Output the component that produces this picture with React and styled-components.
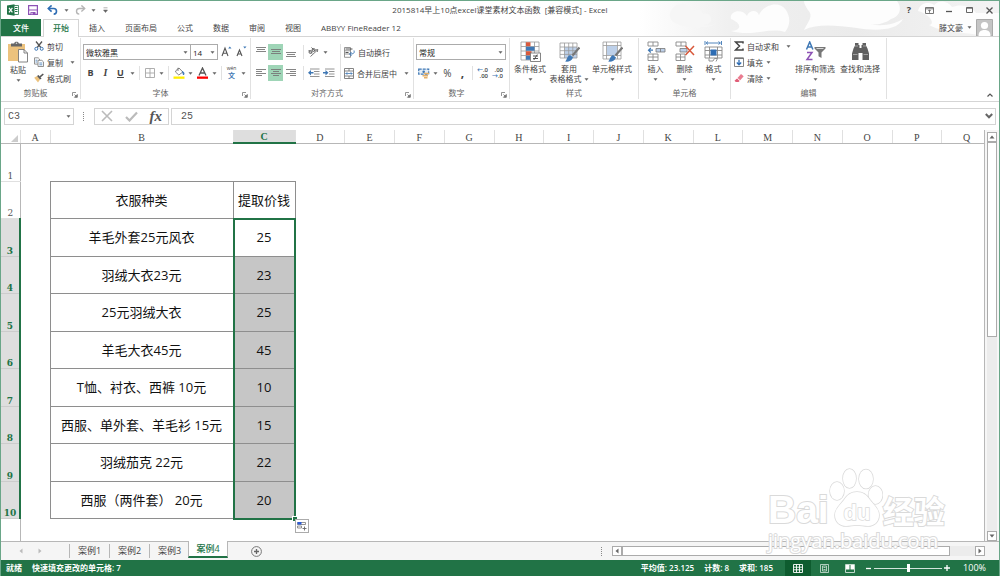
import React from "react";
import styled, { createGlobalStyle, css } from "styled-components";

const GlobalStyle = createGlobalStyle`
  * { box-sizing: border-box; }
  body {
    margin: 0;
    font-family: "Open Sans", "Noto Sans CJK SC", sans-serif;
    font-size: 8px;
    color: #444;
    background: #fff;
  }
  button, select, input {
    font: inherit;
    color: inherit;
    margin: 0;
    padding: 0;
    border: 0;
    background: none;
  }
  svg { display: block; flex: none; }
`;

const Window = styled.div`
  display: flex;
  flex-direction: column;
  height: 100vh;
  min-height: 480px;
  border: 1px solid #6aa688;
  border-bottom: 0;
  position: relative;
  overflow: hidden;
`;

/* ---------- title bar and tabs ---------- */

const Header = styled.header`
  position: relative;
  flex: none;
`;

const HeaderArt = styled.svg`
  position: absolute;
  top: 0;
  right: 0;
`;

const TitleBar = styled.div`
  position: relative;
  display: grid;
  grid-template-columns: 1fr auto 1fr;
  align-items: center;
  height: 18px;
`;

const QuickAccess = styled.div`
  display: flex;
  align-items: center;
  padding-left: 2px;
`;

const Title = styled.h1`
  margin: 0;
  font-size: 8px;
  font-weight: 400;
  line-height: 18px;
`;

const WindowButtons = styled.div`
  display: flex;
  justify-content: flex-end;
`;

const IconButton = styled.button`
  display: flex;
  align-items: center;
  justify-content: center;
  flex: none;
  width: ${({ $w }) => $w || 15}px;
  height: 16px;
  background: ${({ $on }) => ($on ? "#9fd5b7" : "none")};
`;

const TabRow = styled.nav`
  position: relative;
  display: flex;
  align-items: stretch;
  height: 18px;
  border-bottom: 1px solid #d5d5d5;
`;

const Tab = styled.a`
  padding: 0 10px;
  line-height: 17px;
  color: #444;
  text-decoration: none;
  white-space: nowrap;
  ${({ $active }) =>
    $active &&
    css`
      height: 18px;
      padding: 0 9px;
      background: #fff;
      border: 1px solid #d5d5d5;
      border-bottom: 0;
      line-height: 16px;
      color: #217346;
      font-weight: 500;
    `}
`;

const FileTab = styled(Tab)`
  width: 40px;
  margin-right: 2px;
  padding: 0;
  text-align: center;
  color: #fff;
  font-weight: 500;
  background: #217346;
`;

const Account = styled.button`
  display: flex;
  align-items: center;
  gap: 4px;
  margin: 0 6px 0 auto;
`;

/* ---------- ribbon ---------- */

const Ribbon = styled.section`
  display: flex;
  flex: none;
  height: 65px;
  border-bottom: 1px solid #d5d5d5;
`;

const Group = styled.div`
  display: flex;
  flex-direction: column;
  flex: none;
  width: ${({ $w }) => $w}px;
  margin: 1px 0 2px;
  border-right: 1px solid #e1e1e1;
`;

const GroupBody = styled.div`
  display: flex;
  flex: 1;
  padding: 0 2px;
`;

const GroupFooter = styled.div`
  display: flex;
  align-items: center;
  height: 12px;
  padding: 0 2px;
  color: #666;
  line-height: 12px;

  span {
    flex: 1;
    text-align: center;
  }

  button {
    width: 10px;
    padding: 3px 0 0 4px;
  }
`;

const Rows = styled.div`
  display: flex;
  flex-direction: column;
  flex: none;
  gap: 5px;
  padding: 6px 0 0;
  ${({ $w }) => $w && `width: ${$w}px;`}
`;

const Row = styled.div`
  display: flex;
  align-items: center;
  height: 16px;
`;

const Divider = styled.span`
  flex: none;
  width: 1px;
  height: ${({ $h }) => $h || 14}px;
  margin: ${({ $top }) => $top || 0}px 2px 0;
  background: #e1e1e1;
`;

const Stack = styled.div`
  display: flex;
  flex-direction: column;
`;

const SmallButton = styled.button`
  display: flex;
  align-items: center;
  gap: 3px;
  height: 16px;
  padding: 0 1px;
  white-space: nowrap;

  svg:last-child {
    margin-left: ${({ $caretGap }) => $caretGap || 0}px;
  }
`;

const BigButton = styled.button`
  display: flex;
  flex-direction: column;
  align-items: center;
  width: ${({ $w }) => $w}px;
  height: 48px;
  padding-top: 3px;
  line-height: 10px;
  white-space: nowrap;

  > svg {
    margin-bottom: 2px;
  }
`;

const CaretLine = styled.span`
  display: flex;
  align-items: center;
  justify-content: center;
  gap: 2px;
  height: 10px;
`;

const SelectBox = styled.div`
  position: relative;
  width: ${({ $w }) => $w}px;
  height: 16px;
  margin-left: ${({ $joined }) => ($joined ? -1 : 0)}px;

  select {
    appearance: none;
    width: 100%;
    height: 100%;
    padding: 0 10px 0 2px;
    border: 1px solid #ababab;
    background: #fff;
    color: #222;
  }

  svg {
    position: absolute;
    right: 3px;
    top: 7px;
    pointer-events: none;
  }
`;

const Letter = styled.span`
  font-size: ${({ $size }) => $size || 9}px;
  line-height: 12px;
  font-weight: ${({ $bold }) => ($bold ? 700 : 400)};
  font-style: ${({ $italic }) => ($italic ? "italic" : "normal")};
  font-family: ${({ $italic }) => ($italic ? '"Liberation Serif", serif' : "inherit")};
  text-decoration: ${({ $underline }) => ($underline ? "underline" : "none")};
`;

const CollapseButton = styled(IconButton)`
  align-self: flex-end;
  margin: 0 2px 0 auto;
  height: 12px;
`;

/* ---------- formula bar ---------- */

const FormulaBar = styled.div`
  display: flex;
  align-items: center;
  flex: none;
  height: 28px;
  padding: 0 3px;
  font-family: "Liberation Mono", monospace;
  font-size: 10px;
  color: #555;
`;

const Field = styled.div`
  display: flex;
  align-items: center;
  justify-content: space-around;
  flex: ${({ $grow }) => ($grow ? 1 : "none")};
  width: ${({ $w }) => ($w ? `${$w}px` : "auto")};
  height: 17px;
  margin-right: ${({ $gap }) => $gap || 0}px;
  border: 1px solid #d4d4d4;
  background: #fff;

  input {
    flex: 1;
    min-width: 0;
    padding-left: ${({ $pad }) => $pad || 3}px;
    outline: none;
  }
`;

const Dots = styled.span`
  flex: none;
  width: 2px;
  height: 9px;
  border-left: 1px dotted #888;
  margin: 0 9px;
`;

const FxButton = styled(IconButton)`
  font: italic 700 15px "Liberation Serif", serif;
  color: #555;
`;

/* ---------- sheet ---------- */

const Workspace = styled.main`
  display: flex;
  flex: 1;
  min-height: 0;
  background: #f6f6f6;
`;

const SheetView = styled.div`
  flex: 1;
  min-width: 0;
  overflow: hidden;
  background: #fff;
  border-right: 1px solid #b7b7b7;
`;

const Sheet = styled.table`
  width: calc(100% + 8px);
  height: 100%;
  table-layout: fixed;
  border-collapse: collapse;

  td, th {
    padding: 0;
  }
`;

const HeadRow = styled.tr`
  height: 13px;
`;

const ColHead = styled.th`
  font: ${({ $active }) => ($active ? 700 : 400)} 10px/10px "Liberation Serif", serif;
  vertical-align: bottom;
  color: ${({ $active }) => ($active ? "#217346" : "#444")};
  background: ${({ $active }) => ($active ? "#dedede" : "#fff")};
  border-right: 1px solid #e0e0e0;
  border-bottom: ${({ $active }) => ($active ? "2px solid #217346" : "1px solid #b7b7b7")};
`;

const Corner = styled(ColHead)`
  svg {
    margin: 0 2px 1px auto;
  }
`;

const SheetRow = styled.tr`
  height: 37px;

  &:nth-child(odd) {
    height: 38px;
  }
`;

const RowHead = styled.th`
  font: ${({ $active }) => ($active ? 700 : 400)} 9px/9px "DejaVu Serif", serif;
  vertical-align: bottom;
  color: ${({ $active }) => ($active ? "#217346" : "#555")};
  background: ${({ $active }) => ($active ? "#dedede" : "#fff")};
  border-bottom: 1px solid ${({ $active }) => ($active ? "#ccc" : "#e0e0e0")};
  border-right: ${({ $active }) => ($active ? "2px solid #217346" : "1px solid #b7b7b7")};
`;

const FillerHead = styled.th`
  border-right: 1px solid #b7b7b7;
`;

const Cell = styled.td`
  position: relative;
  border: 1px solid #8e8e8e;
  text-align: center;
  font-size: 13px;
  line-height: 18px;
  color: #111;
  white-space: nowrap;
  background: ${({ $picked }) => ($picked ? "#c6c6c6" : "#fff")};
`;

const Selection = styled.div`
  position: absolute;
  z-index: 1;
  top: -1px;
  left: -1px;
  right: -1px;
  height: 302px;
  border: 2px solid #217346;
  pointer-events: none;

  &::after {
    content: "";
    position: absolute;
    right: -3px;
    bottom: -3px;
    width: 4px;
    height: 4px;
    background: #217346;
    outline: 1px solid #fff;
  }
`;

const FillOptions = styled.button`
  position: absolute;
  z-index: 1;
  top: 300px;
  left: 100%;
  display: grid;
  place-items: center;
  width: 14px;
  height: 14px;
  border: 1px solid #ababab;
  background: #fff;
`;

const VerticalScroll = styled.div`
  display: flex;
  flex-direction: column;
  flex: none;
  width: 14px;
  padding: 2px 2px 0;
`;

const ScrollButton = styled.button`
  display: grid;
  place-items: center;
  flex: none;
  width: 10px;
  height: 10px;
  border: 1px solid #ababab;
  background: #fff;
`;

const ScrollTrack = styled.div`
  display: flex;
  flex-direction: ${({ $row }) => ($row ? "row" : "column")};
  flex: 1;
  background: #ececec;
`;

const ScrollThumb = styled.div`
  flex: 0 0 ${({ $size }) => $size};
  border: 1px solid #ababab;
  background: #fff;
`;

/* ---------- sheet tabs and status bar ---------- */

const SheetBar = styled.div`
  display: flex;
  align-items: center;
  flex: none;
  height: 19px;
  border-top: 1px solid #b7b7b7;
  background: #f5f5f5;
`;

const SheetNav = styled.div`
  display: flex;
  width: 68px;
  padding-left: 10px;
`;

const SheetTab = styled.button`
  align-self: flex-start;
  width: 40px;
  height: ${({ $active }) => ($active ? 17 : 14)}px;
  margin-top: ${({ $active }) => ($active ? -1 : 2)}px;
  border-left: 1px solid #b7b7b7;
  font-size: 9px;
  line-height: 12px;
  ${({ $active }) =>
    $active &&
    css`
      margin-left: -1px;
      border-right: 1px solid #b7b7b7;
      border-bottom: 2px solid #217346;
      background: #fff;
      color: #217346;
      font-weight: 500;
    `}
`;

const HorizontalScroll = styled.div`
  display: flex;
  width: 373px;
  height: 10px;
  margin-right: 14px;
`;

const StatusBar = styled.footer`
  display: flex;
  align-items: center;
  flex: none;
  height: 16px;
  padding: 0 13px 0 5px;
  background: #217346;
  color: #fff;
  font-weight: 600;
  line-height: 12px;
`;

const StatusText = styled.span`
  margin-right: ${({ $gap }) => $gap || 10}px;
`;

const Spacer = styled.span`
  flex: 1;
`;

const ViewButton = styled.button`
  display: grid;
  place-items: center;
  width: 26px;
  height: 16px;
  background: ${({ $on }) => ($on ? "#0e5c2f" : "none")};
`;

const ZoomSlider = styled.input`
  appearance: none;
  width: 68px;
  height: 12px;
  background: linear-gradient(#d3e4da, #d3e4da) center / 100% 1px no-repeat;

  &::-webkit-slider-thumb {
    appearance: none;
    width: 3px;
    height: 8px;
    background: #fff;
  }
`;

const ZoomLevel = styled.button`
  width: 34px;
  text-align: right;
  font-size: 9px;
  font-weight: 400;
`;

/* ---------- watermark ---------- */

const Watermark = styled.div`
  position: absolute;
  right: 51px;
  bottom: 23px;
  z-index: 2;
  width: 180px;
  color: #fff;
  font-weight: 700;
  -webkit-text-stroke: 2px #dadada;
  paint-order: stroke fill;
  pointer-events: none;
`;

const WatermarkLogo = styled.div`
  display: flex;
  align-items: flex-end;
  height: 62px;
  font-family: "Liberation Sans", "Noto Sans CJK SC", sans-serif;
  font-size: 39px;
  line-height: 38px;
`;

const WatermarkCn = styled.span`
  font-family: "Noto Sans CJK SC", sans-serif;
  font-size: 31px;
  line-height: 38px;
`;

const WatermarkUrl = styled.div`
  font-weight: 400;
  font-size: 20px;
  line-height: 24px;
`;

/* ---------- icons ---------- */

const Svg = ({ w = 12, h = w, vw = w, vh = h, children }) => (
  <svg width={w} height={h} viewBox={`0 0 ${vw} ${vh}`} fill="none" aria-hidden="true">
    {children}
  </svg>
);

const Caret = () => (
  <Svg w={5} h={3}>
    <path d="M0.5 0.3h4L2.5 2.7z" fill="#666" />
  </Svg>
);

const Arrow = ({ d, color = "#666" }) => (
  <Svg w={6}>
    <path d={d} fill={color} />
  </Svg>
);

const ExcelIcon = () => (
  <Svg w={12}>
    <path d="M7 1.5h4.5v9H7" fill="#fff" stroke="#217346" strokeWidth=".8" />
    <path d="M8 3.5h2.5M8 5.5h2.5M8 7.5h2.5" stroke="#217346" />
    <path d="M0 1.5L7.5.3v11.4L0 10.5z" fill="#217346" />
    <path d="M2 3.8l3.4 4.6M5.4 3.8L2 8.4" stroke="#fff" strokeWidth="1.2" />
  </Svg>
);

const SaveIcon = () => (
  <Svg w={10}>
    <path d="M.6.6h8.8v8.8H.6z" stroke="#8d52b5" strokeWidth="1.2" />
    <path d="M.6 5h8.800" stroke="#8d52b5" />
    <path d="M2.500 7h5v2.500h-5z" fill="#8d52b5" />
    <path d="M3.500 7.800h1v1.500h-1z" fill="#fff" />
  </Svg>
);

const UndoIcon = ({ color }) => (
  <Svg w={11} h={10}>
    <path d="M1.5 3.5h5.2a2.8 2.8 0 010 5.6" stroke={color} strokeWidth="1.6" />
    <path d="M4.6.4L1.3 3.5l3.3 3.1" stroke={color} strokeWidth="1.6" />
  </Svg>
);

const RedoIcon = ({ color }) => (
  <Svg w={11} h={10}>
    <path d="M9.5 3.5H4.3a2.8 2.8 0 000 5.6" stroke={color} strokeWidth="1.4" />
    <path d="M6.4.4l3.3 3.1-3.3 3.1" stroke={color} strokeWidth="1.4" />
  </Svg>
);

const PasteIcon = () => (
  <Svg w={22}>
    <path d="M1 3h17v17H1z" fill="#ecc27d" />
    <path d="M4 2.5h3.2C7.2.2 11.8.2 11.8 2.5H15v3H4z" fill="#666" />
    <path d="M8.8 2.2h1.4" stroke="#fff" />
    <path d="M11.5 8.5h5.5l3.5 3.5v9h-9z" fill="#fff" stroke="#777" strokeWidth=".9" />
    <path d="M17 8.5v3.5h3.5" stroke="#777" strokeWidth=".9" />
  </Svg>
);

const CutIcon = () => (
  <Svg w={10}>
    <path d="M2 .5l4.8 6M8 .5L3.2 6.5" stroke="#555" strokeWidth="1.3" />
    <circle cx="2.3" cy="7.8" r="1.5" stroke="#3f78b5" />
    <circle cx="7.7" cy="7.8" r="1.5" stroke="#3f78b5" />
  </Svg>
);

const CopyIcon = () => (
  <Svg w={10}>
    <path d="M.5.8h3.7l1.300 1.300v5H.5z" fill="#fff" stroke="#777" strokeWidth=".8" />
    <path d="M4 3.300h3.800l1.700 1.600v4.600H4z" fill="#fff" stroke="#777" strokeWidth=".8" />
    <path d="M1.500 3.200h1.800M1.500 5h1.800M5.300 6h3M5.300 7.800h3" stroke="#3f78b5" strokeWidth=".8" />
  </Svg>
);

const BrushIcon = () => (
  <Svg w={10}>
    <path d="M.2 4.800L3 3l3 3.400-2 3.200z" fill="#ecc27d" />
    <path d="M3 3l1.500-1L7.600 5.500 6 6.500z" fill="#555" />
    <path d="M6 3.800L9.300 1" stroke="#555" strokeWidth="1.600" />
  </Svg>
);

const BorderIcon = () => (
  <Svg w={10}>
    <path d="M.5.5h9v9h-9zM5 .5v9M.5 5h9" stroke="#a6a6a6" strokeWidth=".9" />
  </Svg>
);

const FillIcon = () => (
  <Svg w={12} h={12}>
    <path d="M3 3.500l3-2.500 3.800 4-4 3L2.500 5z" fill="#fff" stroke="#666" strokeWidth=".8" />
    <path d="M5 4V.8" stroke="#666" strokeWidth=".8" />
    <path d="M9.500 4.500c2 .8 1.500 2.500 1 3.500z" fill="#3f78b5" stroke="#3f78b5" />
    <path d="M.5 9.500h11v2.300H.5z" fill="#ffee00" />
  </Svg>
);

const FontColorIcon = () => (
  <Svg w={11} h={12}>
    <path d="M2 8.500L5.500 1 9 8.500M3.300 6h4.400" stroke="#555" strokeWidth="1.300" />
    <path d="M0 9.500h11v2.300H0z" fill="#f00" />
  </Svg>
);

const Phonetic = styled.span`
  display: flex;
  flex-direction: column;
  align-items: center;
  font-size: 5px;
  line-height: 6px;

  b {
    font-size: 7px;
    line-height: 10px;
    color: #3f78b5;
  }
`;

const FontSizeIcon = ({ up }) => (
  <Svg w={11} h={12}>
    <path d={up ? "M1 10l3-8 3 8M2.200 7.300h3.600" : "M1 10l2.500-6L6 10M2 8h3"} stroke="#555" strokeWidth="1.100" />
    <path d={up ? "M7.200 2.500L8.800.5l1.700 2z" : "M7.200.5h3.300L8.800 2.500z"} fill="#3f78b5" />
  </Svg>
);

// each line of an alignment icon is [x, length]
const LinesIcon = ({ lines, top = 1, step = 2 }) => (
  <Svg w={10} h={12}>
    {lines.map(([x, len], i) => (
      <path key={i} d={`M${x} ${top + i * step + 0.5}h${len}`} stroke="#777" strokeWidth=".9" />
    ))}
  </Svg>
);

const threeLines = [[0, 10], [1, 8], [0, 10]];

const OrientationIcon = () => (
  <Svg w={11} h={10}>
    <path d="M2.500 9.500l7-6.500M9.800 2.500l-2.500.6M9.800 2.500l-.5 2.500" stroke="#777" />
    <circle cx="2.500" cy="5" r="1.500" stroke="#555" strokeWidth=".9" />
    <circle cx="5.600" cy="3" r="1.500" stroke="#555" strokeWidth=".9" />
    <path d="M.6 3l3.300 3.300M3.500.5l3.300 3.500" stroke="#555" strokeWidth=".9" />
  </Svg>
);

const IndentIcon = ({ right }) => (
  <Svg w={12} h={10}>
    <path d="M2 1h9.500M6 3.500h5.500M6 6h5.500M2 8.500h9.500" stroke="#888" strokeWidth=".9" />
    <path d={right ? "M0 4h2.500V2L5.500 4.800 2.500 7.500V5.500H0z" : "M5.500 4H3V2L0 4.800 3 7.500V5.500h2.500z"} fill="#3f78b5" />
  </Svg>
);

const WrapIcon = () => (
  <Svg w={11}>
    <path d="M.5.5h6v9.800h-6zM.5 3.800h6M.5 7h6" stroke="#888" strokeWidth=".9" />
    <path d="M1.500 2h7M1.500 5.500h3" stroke="#555" />
    <path d="M10 3.500c.8 3-1 3.500-4 3.500M7.500 5L5.500 7l2 2" stroke="#3f78b5" />
  </Svg>
);

const MergeIcon = () => (
  <Svg w={10} h={11}>
    <path d="M.5.5h9v10h-9zM.5 3h9M.5 8h9M5 .5V3M5 8v2.500" stroke="#777" strokeWidth=".9" />
    <path d="M1.500 5.500h7M3.300 4.200L2 5.500l1.300 1.300M6.700 4.200L8 5.500 6.700 6.800" stroke="#3f78b5" strokeWidth=".8" />
  </Svg>
);

const MoneyIcon = () => (
  <Svg w={12} h={11}>
    <path d="M.7 1.200h10v5h-10z" fill="#e6eef7" stroke="#3f78b5" strokeWidth="1.200" strokeDasharray="3 1" />
    <circle cx="5.700" cy="3.700" r="1.300" fill="#3f78b5" />
    <path d="M6 5.500h5M4.500 7.700h5.500M6 9.800h3.500" stroke="#e5b069" strokeWidth="1.500" />
  </Svg>
);

const Decimals = styled.span`
  font-size: 6px;
  line-height: 6px;
  font-weight: 600;
  text-align: right;

  i {
    color: #3f78b5;
    font-style: normal;
  }
`;

const ConditionalIcon = () => (
  <Svg w={21}>
    <path d="M1 1h18v18H1zM1 5.500h18M1 10h18M1 14.500h18M6 1v18M14.500 1v18" stroke="#999" strokeWidth=".8" />
    <path d="M6 1.300h4.500v4H6zM6 10.300h5.500v4H6z" fill="#d8583b" />
    <path d="M6 5.700h8.500v4H6zM6 14.700h4v4H6z" fill="#3f78b5" />
    <path d="M10.500 12h10v8.500h-10z" fill="#fff" stroke="#777" strokeWidth=".9" />
    <path d="M13 15h5M13 17.500h5M17.300 13.500l-3.500 5.500" stroke="#444" strokeWidth=".9" />
  </Svg>
);

const Brush = () => (
  <>
    <path d="M20.500 6.500l-7 8" stroke="#777" strokeWidth="2.200" />
    <path d="M6 20.500c2-1 1.500-5 5-6.500l3 2.500c-1.500 4-5 4.500-8 4z" fill="#3f78b5" />
  </>
);

const TableFormatIcon = () => (
  <Svg w={21}>
    <path d="M5.500 6h12.500v11H5.500z" fill="#bdd0e9" />
    <path d="M1 2h17v15H1zM1 6h17M1 9.700h17M1 13.400h17M5.500 2v15M9.700 2v15M13.800 2v15" stroke="#999" strokeWidth=".8" />
    <Brush />
  </Svg>
);

const CellStyleIcon = () => (
  <Svg w={21}>
    <path d="M1 1h18v17H1zM1 4.500h18M1 14.500h18M4.500 1v17M15.500 1v17" stroke="#999" strokeWidth=".8" />
    <path d="M5 5h10v9H5z" fill="#bdd0e9" />
    <Brush />
  </Svg>
);

const InsertIcon = () => (
  <Svg w={21}>
    <path d="M3 1h10v4H3zM8 1v4M3 13h10v6.500H3zM8 13v6.500M3 16h10" stroke="#888" strokeWidth=".9" />
    <path d="M11 7.500h9v3.500h-9z" fill="#bdd0e9" stroke="#777" strokeWidth=".8" />
    <path d="M15.500 7.500V11" stroke="#777" strokeWidth=".8" />
    <path d="M3.500 9.200h4.500M5.800 7L3.500 9.200l2.300 2.300" stroke="#3f78b5" strokeWidth="1.200" />
  </Svg>
);

const DeleteIcon = () => (
  <Svg w={21}>
    <path d="M2 1h10v4H2zM7 1v4M2 13h9v6.500H2zM6.500 13v6.500M2 16h9" stroke="#888" strokeWidth=".9" />
    <path d="M6 7.500h7v3.500H6z" fill="#bdd0e9" stroke="#777" strokeWidth=".8" />
    <path d="M11.500 5l8.500 9M20 5l-8.500 9" stroke="#d8583b" strokeWidth="1.500" />
  </Svg>
);

const FormatIcon = () => (
  <Svg w={21}>
    <path d="M2 6h17v11H2zM2 9.500h17M2 14h17M6.500 6v11M14.500 6v11M6 17.500v2.500h4l1.500-2.500h3l-1.500 3" stroke="#888" strokeWidth=".9" />
    <path d="M7.500 8.500h6v6h-6z" fill="#2e6db4" />
    <path d="M2 0v4M18.500 0v4M3 2h14.500M5 .5L3.200 2 5 3.500M15.500.5L17.300 2l-1.800 1.500" stroke="#3f78b5" strokeWidth=".9" />
  </Svg>
);

const SumIcon = () => (
  <Svg w={10}>
    <path d="M9 2.500V.9H1.500l4 4.100-4 4.100H9V7.500" stroke="#444" strokeWidth="1.500" />
  </Svg>
);

const FillDownIcon = () => (
  <Svg w={10}>
    <path d="M.5 1h9v8.500h-9z" stroke="#777" strokeWidth=".9" />
    <path d="M.5 1.300h9" stroke="#777" strokeWidth="1.500" />
    <path d="M5 2.800v5M2.800 5.500L5 7.800l2.200-2.300" stroke="#2e6db4" strokeWidth="1.300" />
  </Svg>
);

const EraserIcon = () => (
  <Svg w={10}>
    <path d="M3.500 5L7 1l2.700 2.300-3.500 4z" fill="#ea7c90" />
    <path d="M3 5.500L5.700 8 4.500 9H1.800L.5 7.800z" fill="#e05c76" />
  </Svg>
);

const SortIcon = () => (
  <Svg w={21}>
    <path d="M1.500 8.500L4.700 1l3.200 7.500M2.700 6h4" stroke="#3f78b5" strokeWidth="1.500" />
    <path d="M2 11.500h5l-5 7h5.500" stroke="#8d52b5" strokeWidth="1.500" />
    <path d="M9.500 6H20.500v1.500l-4 4V17l-3-1.800v-3.700l-4-4z" fill="#777" />
    <path d="M11.500 7.500h7" stroke="#fff" strokeWidth=".7" />
  </Svg>
);

const BinocularsIcon = () => (
  <Svg w={21}>
    <path d="M5 2h3.500v2H9.500v3h2V4h1V2H16v2.500l1.500 3 1.500 5V19h-6.500v-7h-4v7H2v-6.500l1.500-5L5 4.500z" fill="#606060" />
    <path d="M3 13.500h4.500M13.500 13.500H18M5 5h3M13 5h3" stroke="#bbb" strokeWidth=".7" />
  </Svg>
);

const LauncherIcon = () => (
  <Svg w={6}>
    <path d="M.5 4V.5H4" stroke="#888" strokeWidth=".9" />
    <path d="M2.500 2.500l2 2M5.300 2.500v2.800H2.500z" stroke="#777" strokeWidth=".9" fill="#777" />
  </Svg>
);

/* ---------- pieces ---------- */

function RibbonGroup({ title, width, launcher, children }) {
  return (
    <Group $w={width} role="group" aria-label={title}>
      <GroupBody>{children}</GroupBody>
      <GroupFooter>
        <span>{title}</span>
        {launcher && (
          <button aria-label={`${title}设置`}>
            <LauncherIcon />
          </button>
        )}
      </GroupFooter>
    </Group>
  );
}

function Dropdown({ label, width, joined, value }) {
  return (
    <SelectBox $w={width} $joined={joined}>
      <select aria-label={label}>
        <option>{value}</option>
      </select>
      <Caret />
    </SelectBox>
  );
}

function Big({ icon, label, second, width }) {
  return (
    <BigButton $w={width}>
      {icon}
      <span>{label}</span>
      <CaretLine>
        {second}
        <Caret />
      </CaretLine>
    </BigButton>
  );
}

const More = () => (
  <IconButton $w={9} aria-label="更多">
    <Caret />
  </IconButton>
);

const tabs = ["插入", "页面布局", "公式", "数据", "审阅", "视图", "ABBYY FineReader 12"];

const otherColumns = "DEFGHIJKLMNOPQ".split("");

const data = [
  ["羊毛外套25元风衣", 25],
  ["羽绒大衣23元", 23],
  ["25元羽绒大衣", 25],
  ["羊毛大衣45元", 45],
  ["T恤、衬衣、西裤 10元", 10],
  ["西服、单外套、羊毛衫 15元", 15],
  ["羽绒茄克 22元", 22],
  ["西服（两件套） 20元", 20],
];

function SpreadSheet() {
  return (
    <Sheet>
      <colgroup>
        <col width="19" />
        <col width="30" />
        <col width="183" />
        <col width="62" />
        {otherColumns.map((name) => (
          <col key={name} />
        ))}
      </colgroup>
      <thead>
        <HeadRow>
          <Corner>
            <Svg w={7}>
              <path d="M7 0v7H0z" fill="#ccc" />
            </Svg>
          </Corner>
          <ColHead>A</ColHead>
          <ColHead>B</ColHead>
          <ColHead $active>C</ColHead>
          {otherColumns.map((name) => (
            <ColHead key={name}>{name}</ColHead>
          ))}
        </HeadRow>
      </thead>
      <tbody>
        <SheetRow>
          <RowHead>1</RowHead>
        </SheetRow>
        <SheetRow>
          <RowHead>2</RowHead>
          <td />
          <Cell>衣服种类</Cell>
          <Cell>提取价钱</Cell>
        </SheetRow>
        {data.map(([name, price], i) => (
          <SheetRow key={name}>
            <RowHead $active>{i + 3}</RowHead>
            <td />
            <Cell>{name}</Cell>
            <Cell $picked={i > 0}>
              {price}
              {i === 0 && (
                <>
                  <Selection />
                  <FillOptions aria-label="自动填充选项">
                    <Svg w={10}>
                      <path d="M.5 1.500h8v2h-8zM.5 5h4v2h-4z" stroke="#777" strokeWidth=".8" />
                      <path d="M.5 1h4v2.500h-4z" fill="#2a5bd7" />
                      <path d="M7.500 5.500v4M5.500 7.500h4" stroke="#666" strokeWidth=".9" />
                    </Svg>
                  </FillOptions>
                </>
              )}
            </Cell>
          </SheetRow>
        ))}
        <tr>
          <FillerHead />
        </tr>
      </tbody>
    </Sheet>
  );
}

function HeaderBackground() {
  return (
    <HeaderArt width="360" height="36" viewBox="0 0 360 36" aria-hidden="true">
      <defs>
        <linearGradient id="haze">
          <stop offset="0" stopColor="#fff" />
          <stop offset=".25" stopColor="#f0f0f0" />
          <stop offset=".6" stopColor="#ebebeb" />
          <stop offset="1" stopColor="#f3f3f3" />
        </linearGradient>
      </defs>
      <path d="M0 0h360v36H0z" fill="url(#haze)" />
      <path d="M38 23c-8-3-10-12-2-18 8-5 16-1 18 6 4-4 9-2 10 2 5-2 9 2 8 7-2 4-6 4-10 4 8 1 12 0 16-2-8 5-26 7-40 1z" fill="#f6f6f6" />
      <g fill="#fdfdfd">
        <path d="M92 18c-2-8 11-11 16-3 2-6 10-7 12-1 4-10 20-15 27-5 5 8 4 16-1 22-16-5-32 5-54-1 12-1 10-8 0-12z" />
        <path d="M165 0h93c6 8 2 16-6 18-8 6-18 6-22 5 14 3 26 0 34-5-6 12-28 12-46 9-24-3-40-4-53 2 4-8 10-14 4-20-2-3-4-6-4-9z" />
        <path d="M279 10c2-8 10-10 16-6 6-6 14-4 18 2 10-4 20 0 24 6h23v24h-14c-16-6-36-2-56-12 8-2-2-12-11-14z" />
      </g>
    </HeaderArt>
  );
}

export default function App() {
  return (
    <>
      <GlobalStyle />
      <Window>
        <Header>
          <HeaderBackground />
          <TitleBar>
            <QuickAccess>
              <IconButton $w={20} aria-label="Excel"><ExcelIcon /></IconButton>
              <IconButton $w={20} aria-label="保存"><SaveIcon /></IconButton>
              <IconButton $w={19} aria-label="撤消"><UndoIcon color="#2e6db4" /></IconButton>
              <More />
              <IconButton $w={18} aria-label="恢复"><RedoIcon color="#b5b5b5" /></IconButton>
              <More />
              <IconButton aria-label="自定义快速访问工具栏">
                <Svg w={5} h={6}>
                  <path d="M.5.8h4M.5 3h4L2.500 5.500z" fill="#666" stroke="#666" strokeWidth=".5" />
                </Svg>
              </IconButton>
            </QuickAccess>
            <Title>2015814早上10点excel课堂素材文本函数&nbsp; [兼容模式] - Excel</Title>
            <WindowButtons>
              <IconButton $w={20} aria-label="帮助"><Letter $bold>?</Letter></IconButton>
              <IconButton $w={20} aria-label="功能区显示选项">
                <Svg w={9} h={7}>
                  <path d="M.5.5h8v6h-8zM.5 1.800h8M4.500 5.800V3M3.300 4l1.200-1.200L5.700 4" stroke="#666" strokeWidth=".9" />
                </Svg>
              </IconButton>
              <IconButton $w={20} aria-label="最小化">
                <Svg w={6}><path d="M0 4.500h6" stroke="#555" strokeWidth="1.300" /></Svg>
              </IconButton>
              <IconButton $w={20} aria-label="最大化">
                <Svg w={7} h={6}><path d="M.5.5h6v5h-6zM.5 1.200h6" stroke="#666" /></Svg>
              </IconButton>
              <IconButton $w={20} aria-label="关闭">
                <Svg w={7}><path d="M.5.5l6 6M6.500.5l-6 6" stroke="#555" strokeWidth="1.300" /></Svg>
              </IconButton>
            </WindowButtons>
          </TitleBar>
          <TabRow>
            <FileTab href="#file">文件</FileTab>
            <Tab href="#home" $active>开始</Tab>
            {tabs.map((tab) => (
              <Tab key={tab} href="#tab">{tab}</Tab>
            ))}
            <Account>
              <span>滕文豪</span>
              <Caret />
              <Svg w={17}>
                <path d="M.5.5h16v16.500H.5z" fill="#c4c4c4" stroke="#aaa" />
                <circle cx="8.500" cy="6.500" r="3.600" fill="#fff" />
                <path d="M2.500 17c0-4 2-6 6-6s6 2 6 6z" fill="#fff" />
              </Svg>
            </Account>
          </TabRow>
        </Header>

        <Ribbon>
          <RibbonGroup title="剪贴板" width={80} launcher>
            <Big icon={<PasteIcon />} label="粘贴" width={30} />
            <Stack>
              <SmallButton><CutIcon />剪切</SmallButton>
              <SmallButton $caretGap={4}><CopyIcon />复制<Caret /></SmallButton>
              <SmallButton><BrushIcon />格式刷</SmallButton>
            </Stack>
          </RibbonGroup>

          <RibbonGroup title="字体" width={170} launcher>
            <Rows>
              <Row>
                <Dropdown label="字体" value="微软雅黑" width={108} />
                <Dropdown label="字号" value="14" width={28} joined />
                <IconButton $w={16} aria-label="增大字号"><FontSizeIcon up /></IconButton>
                <IconButton aria-label="减小字号"><FontSizeIcon /></IconButton>
              </Row>
              <Row>
                <IconButton aria-label="加粗"><Letter $bold>B</Letter></IconButton>
                <IconButton aria-label="倾斜"><Letter $size={10} $bold $italic>I</Letter></IconButton>
                <IconButton aria-label="下划线"><Letter $bold $underline>U</Letter></IconButton>
                <More />
                <Divider />
                <IconButton aria-label="边框"><BorderIcon /></IconButton>
                <More />
                <Divider />
                <IconButton aria-label="填充颜色"><FillIcon /></IconButton>
                <More />
                <IconButton aria-label="字体颜色"><FontColorIcon /></IconButton>
                <More />
                <Divider />
                <IconButton aria-label="拼音"><Phonetic>wén<b>文</b></Phonetic></IconButton>
                <More />
              </Row>
            </Rows>
          </RibbonGroup>

          <RibbonGroup title="对齐方式" width={163} launcher>
            <Rows $w={48}>
              <Row>
                <IconButton aria-label="顶端对齐"><LinesIcon lines={threeLines} /></IconButton>
                <IconButton $on aria-label="垂直居中"><LinesIcon lines={threeLines} top={3} /></IconButton>
                <IconButton aria-label="底端对齐"><LinesIcon lines={threeLines} top={6} /></IconButton>
              </Row>
              <Row>
                <IconButton aria-label="左对齐"><LinesIcon lines={[[0, 10], [0, 6], [0, 10], [0, 6]]} top={2} /></IconButton>
                <IconButton $on aria-label="居中"><LinesIcon lines={[[0, 10], [2, 6], [0, 10], [2, 6]]} top={2} /></IconButton>
                <IconButton aria-label="右对齐"><LinesIcon lines={[[0, 10], [4, 6], [0, 10], [4, 6]]} top={2} /></IconButton>
              </Row>
            </Rows>
            <Rows $w={37}>
              <Row>
                <Divider />
                <IconButton aria-label="方向"><OrientationIcon /></IconButton>
                <More />
              </Row>
              <Row>
                <Divider />
                <IconButton aria-label="减少缩进量"><IndentIcon /></IconButton>
                <IconButton aria-label="增加缩进量"><IndentIcon right /></IconButton>
              </Row>
            </Rows>
            <Divider $h={37} $top={6} />
            <Rows>
              <SmallButton><WrapIcon />自动换行</SmallButton>
              <SmallButton $caretGap={4}><MergeIcon />合并后居中<Caret /></SmallButton>
            </Rows>
          </RibbonGroup>

          <RibbonGroup title="数字" width={96} launcher>
            <Rows>
              <Dropdown label="数字格式" value="常规" width={90} />
              <Row>
                <IconButton aria-label="会计数字格式"><MoneyIcon /></IconButton>
                <More />
                <IconButton aria-label="百分比"><Letter $size={10}>%</Letter></IconButton>
                <IconButton aria-label="千位分隔"><Letter $size={12} $bold>,</Letter></IconButton>
                <Divider />
                <IconButton aria-label="增加小数位数"><Decimals><i>←</i>.0<br />.00</Decimals></IconButton>
                <IconButton aria-label="减少小数位数"><Decimals>.00<br /><i>→</i>.0</Decimals></IconButton>
              </Row>
            </Rows>
          </RibbonGroup>

          <RibbonGroup title="样式" width={129}>
            <Big icon={<ConditionalIcon />} label="条件格式" width={36} />
            <Big icon={<TableFormatIcon />} label="套用" second="表格格式" width={42} />
            <Big icon={<CellStyleIcon />} label="单元格样式" width={44} />
          </RibbonGroup>

          <RibbonGroup title="单元格" width={92}>
            <Big icon={<InsertIcon />} label="插入" width={29} />
            <Big icon={<DeleteIcon />} label="删除" width={29} />
            <Big icon={<FormatIcon />} label="格式" width={29} />
          </RibbonGroup>

          <RibbonGroup title="编辑" width={156}>
            <Stack>
              <SmallButton $caretGap={4}><SumIcon />自动求和<Caret /></SmallButton>
              <SmallButton><FillDownIcon />填充<Caret /></SmallButton>
              <SmallButton><EraserIcon />清除<Caret /></SmallButton>
            </Stack>
            <Big icon={<SortIcon />} label="排序和筛选" width={46} />
            <Big icon={<BinocularsIcon />} label="查找和选择" width={44} />
          </RibbonGroup>

          <CollapseButton aria-label="折叠功能区">
            <Svg w={6} h={4}><path d="M.5 3.500L3 1l2.500 2.500" stroke="#555" strokeWidth="1.200" /></Svg>
          </CollapseButton>
        </Ribbon>

        <FormulaBar>
          <Field $w={70}>
            <input aria-label="名称框" defaultValue="C3" />
            <More />
          </Field>
          <Dots />
          <Field $w={75} $gap={2}>
            <IconButton aria-label="取消">
              <Svg w={12}><path d="M1 1l10 10M11 1L1 11" stroke="#bbb" strokeWidth="1.600" /></Svg>
            </IconButton>
            <IconButton aria-label="输入">
              <Svg w={13} h={11}><path d="M1 6l3.500 3.500L12 1.500" stroke="#bbb" strokeWidth="2.200" /></Svg>
            </IconButton>
            <FxButton aria-label="插入函数">fx</FxButton>
          </Field>
          <Field $grow $pad={9}>
            <input aria-label="编辑栏" defaultValue="25" />
            <IconButton $w={12} aria-label="展开编辑栏">
              <Svg w={8} h={6}><path d="M.8 1L4 4.300 7.200 1" stroke="#666" strokeWidth="2" /></Svg>
            </IconButton>
          </Field>
        </FormulaBar>

        <Workspace>
          <SheetView>
            <SpreadSheet />
          </SheetView>
          <VerticalScroll>
            <ScrollButton aria-label="向上滚动"><Arrow d="M.5 4.500h5L3 1.500z" /></ScrollButton>
            <ScrollTrack>
              <ScrollThumb $size="50%" />
            </ScrollTrack>
            <ScrollButton aria-label="向下滚动"><Arrow d="M.5 1.500h5L3 4.500z" /></ScrollButton>
          </VerticalScroll>
        </Workspace>

        <SheetBar>
          <SheetNav>
            <IconButton $w={19} aria-label="上一个"><Arrow color="#bbb" d="M4.500.5v5L1.500 3z" /></IconButton>
            <IconButton $w={19} aria-label="下一个"><Arrow color="#bbb" d="M1.500.5v5L4.500 3z" /></IconButton>
          </SheetNav>
          <SheetTab>案例1</SheetTab>
          <SheetTab>案例2</SheetTab>
          <SheetTab>案例3</SheetTab>
          <SheetTab $active>案例4</SheetTab>
          <IconButton $w={56} aria-label="新工作表">
            <Svg w={11}>
              <circle cx="5.500" cy="5.500" r="4.900" stroke="#777" />
              <path d="M5.500 3v5M3 5.500h5" stroke="#666" strokeWidth="1.300" />
            </Svg>
          </IconButton>
          <Spacer />
          <Dots />
          <HorizontalScroll>
            <ScrollButton aria-label="向左滚动"><Arrow d="M4.500.5v5L1.500 3z" /></ScrollButton>
            <ScrollTrack $row>
              <ScrollThumb $size="93%" />
            </ScrollTrack>
            <ScrollButton aria-label="向右滚动"><Arrow d="M1.500.5v5L4.500 3z" /></ScrollButton>
          </HorizontalScroll>
        </SheetBar>

        <StatusBar>
          <StatusText>就绪</StatusText>
          <StatusText>快速填充更改的单元格: 7</StatusText>
          <Spacer />
          <StatusText>平均值: 23.125</StatusText>
          <StatusText>计数: 8</StatusText>
          <StatusText $gap={12}>求和: 185</StatusText>
          <ViewButton $on aria-label="普通">
            <Svg w={10} h={9}>
              <path d="M.5.5h9v8h-9zM.5 3.200h9M.5 5.800h9M3.500.5v8M6.500.5v8" stroke="#fff" strokeWidth=".9" />
            </Svg>
          </ViewButton>
          <ViewButton aria-label="页面布局">
            <Svg w={9}><path d="M.5.5h8v8h-8zM2.500 2h4v5h-4zM3.500 3.500h2M3.500 5.500h2" stroke="#d3e4da" strokeWidth=".8" /></Svg>
          </ViewButton>
          <ViewButton aria-label="分页预览">
            <Svg w={10} h={9}>
              <path d="M.5.5h9v8h-9z" stroke="#d3e4da" strokeWidth=".9" />
              <path d="M1 1h3.500v4.500H1zM5.500 1H9v4.500H5.500z" fill="#fff" />
            </Svg>
          </ViewButton>
          <IconButton $w={11} aria-label="缩小">
            <Svg w={5}><path d="M0 2.500h5" stroke="#fff" strokeWidth="1.300" /></Svg>
          </IconButton>
          <ZoomSlider type="range" aria-label="显示比例" min="10" max="190" defaultValue="100" />
          <IconButton $w={10} aria-label="放大">
            <Svg w={6}><path d="M0 3h6M3 0v6" stroke="#fff" strokeWidth="1.300" /></Svg>
          </IconButton>
          <ZoomLevel>100%</ZoomLevel>
        </StatusBar>

        <Watermark>
          <WatermarkLogo>
            <span>Bai</span>
            <svg width="54" height="62" viewBox="0 0 54 62" fill="#fff" stroke="#dadada" strokeWidth="1.500">
              <ellipse cx="8" cy="24" rx="7" ry="9" />
              <ellipse cx="20.500" cy="11.500" rx="6.500" ry="9.500" />
              <ellipse cx="37" cy="12" rx="7" ry="9.500" />
              <ellipse cx="46.500" cy="28" rx="7" ry="9" />
              <path d="M28 25c6 0 10 3 13 8 4 5 9 9 9 15 0 7-5 11-11 11-4 0-7-1-11-1s-7 1-11 1c-6 0-11-4-11-11 0-6 5-10 9-15 3-5 7-8 13-8z" />
              <text x="28" y="53" textAnchor="middle" fontSize="22">du</text>
            </svg>
            <WatermarkCn>经验</WatermarkCn>
          </WatermarkLogo>
          <WatermarkUrl>jingyan.baidu.com</WatermarkUrl>
        </Watermark>
      </Window>
    </>
  );
}
